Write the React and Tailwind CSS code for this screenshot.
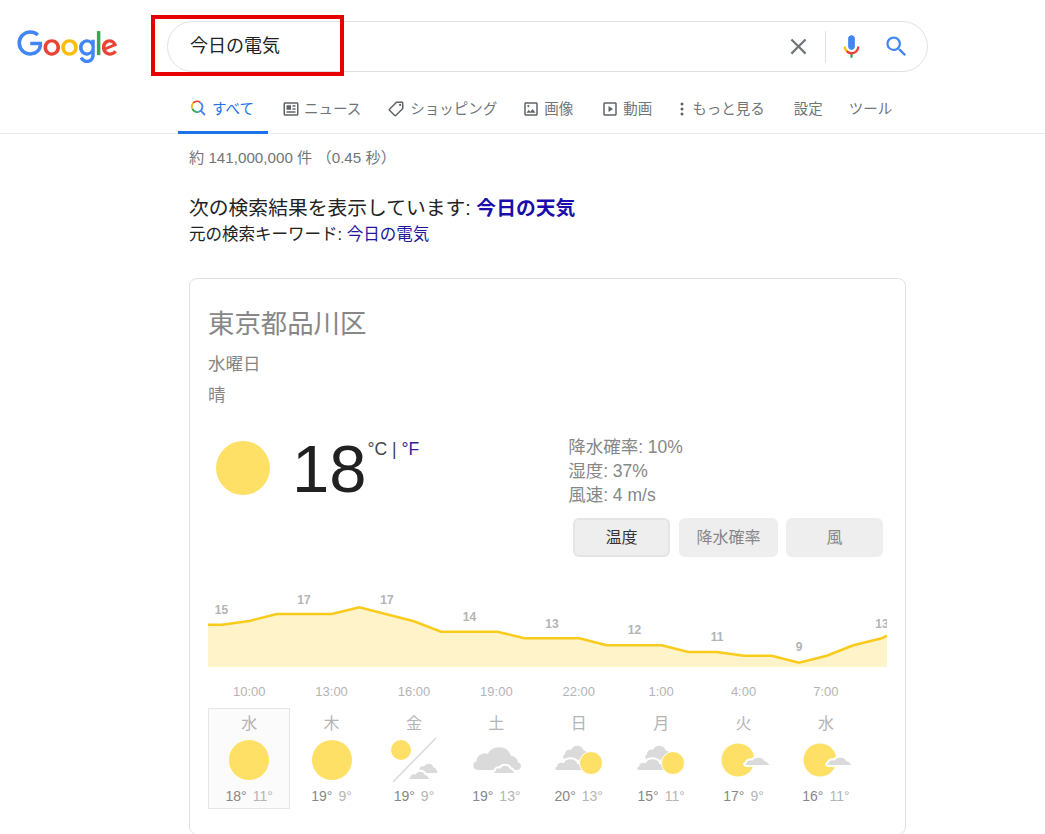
const FONT = "font-['Liberation_Sans','Noto_Sans_CJK_JP',sans-serif]";

const tabs = [
  { name: "ニュース", icon: "news", cls: "ml-[14px] gap-[4px]" },
  { name: "ショッピング", icon: "tag", cls: "ml-[26px] gap-[5px]" },
  { name: "画像", icon: "image", cls: "ml-[25px] gap-[4px]" },
  { name: "動画", icon: "play", cls: "ml-[28px] gap-[4px]" },
  { name: "もっと見る", icon: "more", cls: "ml-[28px] gap-[8px]" },
];

const linePoints = [
  [0, 34.7], [13.7, 34.7], [41.3, 31], [68.7, 24], [123.7, 24], [151.3, 17.3], [206, 31.3], [233, 41.7],
  [289.3, 41.7], [316.3, 48.3], [371.3, 48.3], [398.7, 55.3], [453.7, 55.3], [480.3, 62], [508.7, 62],
  [536, 65.7], [563.7, 65.7], [591, 72.7], [618.7, 65.7], [645.3, 55.3], [673.7, 48.3], [679, 45.7],
];

const chartLabels = [
  [13.5, 24, "15"], [96, 14, "17"], [179, 14, "17"], [261.5, 31, "14"], [344, 38, "13"],
  [426.5, 44, "12"], [509, 51, "11"], [591, 61, "9"], [674, 38, "13"],
];

const times = ["10:00", "13:00", "16:00", "19:00", "22:00", "1:00", "4:00", "7:00"];

const days = [
  { day: "水", hi: "18°", lo: "11°", icon: "sun", active: true },
  { day: "木", hi: "19°", lo: "9°", icon: "sun" },
  { day: "金", hi: "19°", lo: "9°", icon: "split" },
  { day: "土", hi: "19°", lo: "13°", icon: "cloudy" },
  { day: "日", hi: "20°", lo: "13°", icon: "cloudSun" },
  { day: "月", hi: "15°", lo: "11°", icon: "cloudSun" },
  { day: "火", hi: "17°", lo: "9°", icon: "sunCloud" },
  { day: "水", hi: "16°", lo: "11°", icon: "sunCloud" },
];

function GoogleLogo() {
  return (
    <svg viewBox="0 0 272 92" className="w-[101px] h-[34px] shrink-0">
      <path fill="#EA4335" d="M115.75 47.18c0 12.77-9.99 22.18-22.25 22.18s-22.25-9.41-22.25-22.18C71.25 34.32 81.24 25 93.5 25s22.25 9.32 22.25 22.18zm-9.74 0c0-7.98-5.79-13.44-12.51-13.44S80.99 39.2 80.99 47.18c0 7.9 5.79 13.44 12.51 13.44s12.51-5.55 12.51-13.44z" />
      <path fill="#FBBC05" d="M163.75 47.18c0 12.77-9.99 22.18-22.25 22.18s-22.25-9.41-22.25-22.18c0-12.85 9.99-22.18 22.25-22.18s22.25 9.32 22.25 22.18zm-9.74 0c0-7.98-5.79-13.44-12.51-13.44s-12.51 5.46-12.51 13.44c0 7.9 5.79 13.44 12.51 13.44s12.51-5.55 12.51-13.44z" />
      <path fill="#4285F4" d="M209.75 26.34v39.82c0 16.38-9.66 23.07-21.08 23.07-10.75 0-17.22-7.19-19.66-13.07l8.48-3.53c1.51 3.61 5.21 7.87 11.17 7.87 7.31 0 11.84-4.51 11.84-13v-3.19h-.34c-2.18 2.69-6.38 5.04-11.68 5.04-11.09 0-21.25-9.66-21.25-22.09 0-12.52 10.16-22.26 21.25-22.26 5.29 0 9.49 2.35 11.68 4.96h.34v-3.61h9.25zm-8.56 20.92c0-7.81-5.21-13.52-11.84-13.52-6.72 0-12.35 5.71-12.35 13.52 0 7.73 5.63 13.36 12.35 13.36 6.63 0 11.84-5.63 11.84-13.36z" />
      <path fill="#34A853" d="M225 3v65h-9.5V3h9.5z" />
      <path fill="#EA4335" d="M262.02 54.48l7.56 5.04c-2.44 3.61-8.32 9.83-18.48 9.83-12.6 0-22.01-9.74-22.01-22.18 0-13.19 9.49-22.18 20.92-22.18 11.51 0 17.14 9.16 18.98 14.11l1.01 2.52-29.65 12.28c2.27 4.45 5.8 6.72 10.75 6.72 4.96 0 8.4-2.44 10.92-6.14zm-23.27-7.98l19.82-8.23c-1.09-2.77-4.37-4.7-8.23-4.7-4.95 0-11.84 4.37-11.59 12.93z" />
      <path fill="#4285F4" d="M35.29 41.41V32H67c.31 1.64.47 3.58.47 5.68 0 7.06-1.93 15.79-8.15 22.01-6.05 6.3-13.78 9.66-24.02 9.66C16.32 69.35.36 53.89.36 34.91.36 15.93 16.32.47 35.3.47c10.5 0 17.98 4.12 23.6 9.49l-6.64 6.64c-4.03-3.78-9.49-6.72-16.97-6.72-13.86 0-24.7 11.17-24.7 25.03 0 13.86 10.84 25.03 24.7 25.03 8.99 0 14.11-3.61 17.39-6.89 2.66-2.66 4.41-6.46 5.1-11.65l-22.49.01z" />
    </svg>
  );
}

function MicIcon() {
  return (
    <svg viewBox="0 0 24 24" className="w-[27px] h-[27px]">
      <path fill="#4285f4" d="m12 15c1.66 0 3-1.31 3-2.97v-7.02c0-1.66-1.34-3.01-3-3.01s-3 1.34-3 3.01v7.02c0 1.66 1.34 2.97 3 2.97z" />
      <path fill="#34a853" d="m11 18.08h2v3.92h-2z" />
      <path fill="#fbbc05" d="m7.05 16.87c-1.27-1.33-2.05-2.83-2.05-4.87h2c0 1.45 0.56 2.42 1.47 3.38v0.32l-1.15 1.18z" />
      <path fill="#ea4335" d="m12 16.93a4.97 5.25 0 0 1 -3.54 -1.55l-1.41 1.49c1.26 1.34 3.02 2.13 4.95 2.13 3.87 0 6.99-2.92 6.99-6.99h-2c0 2.92-2.24 4.92-4.99 4.92z" />
    </svg>
  );
}

function ColorSearch() {
  return (
    <svg viewBox="0 0 16 16" className="w-4 h-4 shrink-0" fill="none" strokeWidth="1.8">
      <path d="M10.4 2.6A5.2 5.2 0 0 0 3.2 3" stroke="#ea4335" />
      <path d="M3.2 3A5.2 5.2 0 0 0 2.3 8.6" stroke="#fbbc05" />
      <path d="M2.3 8.6A5.2 5.2 0 0 0 8.5 11.8" stroke="#34a853" />
      <path d="M8.5 11.8A5.2 5.2 0 0 0 10.4 2.6M10.4 10.4L15 15" stroke="#4285f4" />
    </svg>
  );
}

function TabIcon({ type }) {
  if (type === "more") {
    return (
      <svg viewBox="0 0 4 16" className="w-1 h-4 shrink-0" fill="#5f6368">
        <circle cx="2" cy="3" r="1.5" />
        <circle cx="2" cy="8" r="1.5" />
        <circle cx="2" cy="13" r="1.5" />
      </svg>
    );
  }
  return (
    <svg viewBox="0 0 24 24" className="w-[18px] h-[18px] shrink-0" fill="#5f6368">
      {type === "news" && (
        <path d="M20 3H4c-1.1 0-2 .9-2 2v14c0 1.1.9 2 2 2h16c1.1 0 2-.9 2-2V5c0-1.1-.9-2-2-2zm0 16H4V5h16v14zM6 7h6v6H6V7zm8 0h4v2h-4V7zm0 4h4v2h-4v-2zM6 15h12v2H6v-2z" />
      )}
      {type === "tag" && (
        <g transform="translate(24 0) scale(-1 1)">
          <path d="M21.41 11.58l-9-9C12.05 2.22 11.55 2 11 2H4c-1.1 0-2 .9-2 2v7c0 .55.22 1.05.59 1.42l9 9c.36.36.86.58 1.41.58.55 0 1.05-.22 1.41-.59l7-7c.37-.36.59-.86.59-1.41 0-.55-.23-1.06-.59-1.42zM13 20.01L4 11V4h7v-.01l9 9-7 7.02z" />
          <circle cx="6.5" cy="6.5" r="1.5" />
        </g>
      )}
      {type === "image" && (
        <path d="M19 5v14H5V5h14m0-2H5c-1.1 0-2 .9-2 2v14c0 1.1.9 2 2 2h14c1.1 0 2-.9 2-2V5c0-1.1-.9-2-2-2zm-4.86 8.86l-3 3.87L9 13.14 6 17h12l-3.86-5.14zM8.5 6.5a1.5 1.5 0 1 1 0 3 1.5 1.5 0 0 1 0-3z" />
      )}
      {type === "play" && (
        <path d="M19 5v14H5V5h14m0-2H5c-1.1 0-2 .9-2 2v14c0 1.1.9 2 2 2h14c1.1 0 2-.9 2-2V5c0-1.1-.9-2-2-2zM10 8v8l6-4-6-4z" />
      )}
    </svg>
  );
}

const CLOUD = "M4 24a4 4 0 0 1 -1 -7.8a7 7 0 0 1 9.5 -6.5a10.5 10.5 0 0 1 19.5 1.5a6.5 6.5 0 0 1 6 6a3.5 3.5 0 0 1 0 6.8Z";

function Cloud({ x, y, s = 1, sy = s, outline = false }) {
  return (
    <path
      d={CLOUD}
      transform={`translate(${x} ${y}) scale(${s} ${sy})`}
      fill="#dadada"
      stroke={outline ? "#ffffff" : "none"}
      strokeWidth={outline ? 2 : 0}
      vectorEffect="non-scaling-stroke"
    />
  );
}

function WeatherIcon({ type }) {
  const sun = "#ffe066";
  return (
    <svg viewBox="0 0 82 50" className="mt-[2px] w-[82px] h-[50px]">
      {type === "sun" && <circle cx="41" cy="25" r="20" fill={sun} />}
      {type === "split" && (
        <g>
          <circle cx="28" cy="15" r="10" fill={sun} />
          <path d="M63 3L20 47" stroke="#dadada" strokeWidth="1.5" />
          <Cloud x="45" y="27" s="0.48" sy="0.46" />
          <Cloud x="35" y="34" s="0.55" sy="0.46" outline />
        </g>
      )}
      {type === "cloudy" && (
        <g>
          <Cloud x="18" y="8" s="1.18" sy="1.12" />
          <Cloud x="38" y="28" s="0.55" sy="0.46" outline />
        </g>
      )}
      {type === "cloudSun" && (
        <g>
          <Cloud x="25" y="8" s="0.65" sy="0.7" />
          <Cloud x="16" y="21" s="0.75" sy="0.62" outline />
          <circle cx="53" cy="28" r="11.5" fill={sun} stroke="#ffffff" strokeWidth="1" />
        </g>
      )}
      {type === "sunCloud" && (
        <g>
          <circle cx="35" cy="25" r="16.5" fill={sun} />
          <Cloud x="41" y="20" s="0.65" sy="0.46" outline />
        </g>
      )}
    </svg>
  );
}

function Chart() {
  const line = linePoints.map((p) => p.join(",")).join(" ");
  return (
    <svg viewBox="0 0 679 80" className="w-[679px] h-[80px] block">
      <polygon points={`0,77 ${line} 679,77`} fill="#fef3c9" />
      <polyline points={line} fill="none" stroke="#f9cb1c" strokeWidth="2.5" />
      {chartLabels.map(([x, y, t]) => (
        <text key={x} x={x} y={y} textAnchor="middle" fontSize="12" fontWeight="700" fill="#b4b4b4">
          {t}
        </text>
      ))}
    </svg>
  );
}

export default function App() {
  return (
    <div className={`${FONT} relative h-[834px] w-[1045px] overflow-hidden bg-white`}>
      <header className="h-[134px] border-b border-[#ebebeb]">
        <div className="flex items-center pt-[21px] pl-[17px]">
          <GoogleLogo />
          <div className="ml-[49px] flex h-[51px] w-[761px] items-center rounded-full border border-[#dfe1e5] pl-[22px] pr-[17px]">
            <span className="flex-1 text-[18px] text-[#222]">今日の電気</span>
            <svg viewBox="0 0 24 24" className="w-[27px] h-[27px]" fill="#70757a">
              <path d="M19 6.41L17.59 5 12 10.59 6.41 5 5 6.41 10.59 12 5 17.59 6.41 19 12 13.41 17.59 19 19 17.59 13.41 12z" />
            </svg>
            <div className="ml-[13px] mr-[12px] h-[32px] w-px bg-[#dfe1e5]" />
            <MicIcon />
            <svg viewBox="0 0 24 24" className="ml-[18px] w-[27px] h-[27px]" fill="#4285f4">
              <path d="M15.5 14h-.79l-.28-.27A6.471 6.471 0 0 0 16 9.5 6.5 6.5 0 1 0 9.5 16c1.61 0 3.09-.59 4.23-1.57l.27.28v.79l5 4.99L20.49 19l-4.99-5zm-6 0C7.01 14 5 11.99 5 9.5S7.01 5 9.5 5 14 7.01 14 9.5 11.99 14 9.5 14z" />
            </svg>
          </div>
        </div>

        <nav className="mt-[13px] flex h-[49px] items-start pl-[178px] text-[14.5px] text-[#70757a]">
          <div className="flex h-[49px] w-[90px] items-start gap-[6px] border-b-[3px] border-[#1a73e8] pl-[12px] pt-[15px] text-[#1a73e8]">
            <ColorSearch />
            <span className="leading-[18px]">すべて</span>
          </div>
          {tabs.map((tab) => (
            <div key={tab.name} className={`${tab.cls} flex items-center pt-[15px] leading-[18px]`}>
              <TabIcon type={tab.icon} />
              <span>{tab.name}</span>
            </div>
          ))}
          <span className="ml-[29px] pt-[15px] leading-[18px]">設定</span>
          <span className="ml-[26px] pt-[15px] leading-[18px]">ツール</span>
        </nav>
      </header>

      <main className="pl-[189px]">
        <p className="pt-[15px] text-[15.2px] leading-[18px] text-[#70757a]">約 141,000,000 件 （0.45 秒）</p>
        <p className="mt-[28px] text-[19.8px] leading-[26px] text-[#222]">
          次の検索結果を表示しています: <b className="font-bold text-[#1a0dab]">今日の天気</b>
        </p>
        <p className="mt-[3px] text-[16.5px] leading-[20px] text-[#222]">
          元の検索キーワード: <span className="text-[#23169b]">今日の電気</span>
        </p>

        <section className="mt-[34px] h-[557px] w-[717px] rounded-lg border border-[#dfe1e5] px-[18px] text-[#878787]">
          <h2 className="pt-[28px] text-[26.4px] leading-[34px]">東京都品川区</h2>
          <p className="mt-[12px] text-[17.5px] leading-[22px]">水曜日</p>
          <p className="mt-[9px] text-[17.5px] leading-[22px]">晴</p>

          <div className="mt-[29px] flex items-start">
            <div className="ml-[8px] mt-[6px] h-[54px] w-[54px] rounded-full bg-[#ffe066]" />
            <span className="ml-[22px] text-[67px] leading-[68px] text-[#212121]">18</span>
            <div className="ml-[1px] mt-[2px] text-[17.5px] leading-[24px] whitespace-nowrap">
              <span className="text-[#444]">°C | </span>
              <span className="text-[#2f1f94]">°F</span>
            </div>
            <div className="ml-[149px] text-[17.5px] leading-[24px]">
              <p>降水確率: 10%</p>
              <p>湿度: 37%</p>
              <p>風速: 4 m/s</p>
            </div>
          </div>

          <div className="mt-[11px] flex justify-end pr-[4px] text-[16px]">
            <div className="flex h-[39px] w-[97px] items-center justify-center rounded-md border-2 border-[#e4e4e4] bg-[#eeeeee] text-[#333]">
              温度
            </div>
            <div className="ml-[9px] flex h-[39px] w-[99px] items-center justify-center rounded-md bg-[#eeeeee]">
              降水確率
            </div>
            <div className="ml-[8px] flex h-[39px] w-[97px] items-center justify-center rounded-md bg-[#eeeeee]">風</div>
          </div>

          <div className="mt-[33px]">
            <Chart />
          </div>

          <div className="mt-[15px] flex text-[13px] leading-[14px] text-[#b4b4b4]">
            {times.map((t) => (
              <span key={t} className="w-[82.4px] text-center">
                {t}
              </span>
            ))}
          </div>

          <div className="mt-[9px] flex">
            {days.map((d, i) => (
              <div
                key={i}
                className={`flex h-[101px] w-[82.4px] flex-col items-center border ${
                  d.active ? "border-[#e6e6e6] bg-[#fbfbfb]" : "border-transparent"
                }`}
              >
                <span className="mt-[6px] text-[16px] leading-[18px] text-[#b4b4b4]">{d.day}</span>
                <WeatherIcon type={d.icon} />
                <div className="text-[14px] leading-[16px] mt-[3px] whitespace-nowrap">
                  <span className="text-[#878787]">{d.hi}</span>
                  <span className="ml-[6px] text-[#b4b4b4]">{d.lo}</span>
                </div>
              </div>
            ))}
          </div>
        </section>
      </main>

      {/* annotation drawn over the screenshot */}
      <div className="absolute left-[151px] top-[15px] h-[61px] w-[193px] border-4 border-[#e60000]" />
    </div>
  );
}
